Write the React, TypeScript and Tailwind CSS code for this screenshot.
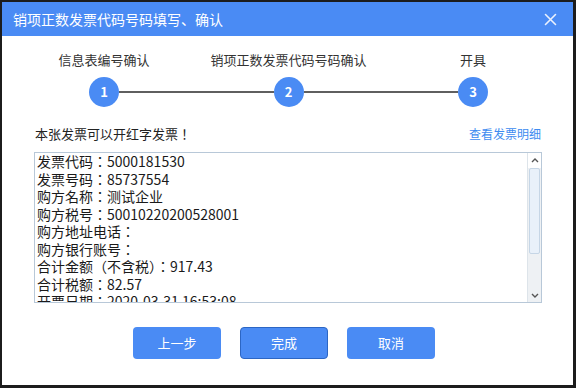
import React from "react";

const font = { fontFamily: '"Noto Sans CJK SC", "Noto Sans", sans-serif' };
const boxFont = { fontFamily: '"Noto Sans CJK TC", "Noto Sans CJK SC", sans-serif' };

const steps = ["信息表编号确认", "销项正数发票代码号码确认", "开具"];

const lines = [
  "发票代码：5000181530",
  "发票号码：85737554",
  "购方名称：测试企业",
  "购方税号：50010220200528001",
  "购方地址电话：",
  "购方银行账号：",
  "合计金额（不含税）：917.43",
  "合计税额：82.57",
  "开票日期：2020-03-31 16:53:08",
];

const StepCircle: React.FC<{ n: number }> = ({ n }) => (
  <div className="w-[30px] h-[30px] rounded-full bg-[#4a8bf4] flex items-center justify-center text-white text-[13px] font-bold shrink-0">
    {n}
  </div>
);

const App: React.FC = () => {
  return (
    <div className="w-[576px] h-[388px] bg-[#1c1c1c] pt-[2px] pl-[2px] pr-[3px] pb-[3px]" style={font}>
      <div className="h-full bg-white flex flex-col">
        {/* title bar */}
        <div className="h-[34px] bg-[#4a8bf4] flex items-center justify-between pl-[11px] pr-[12px] shrink-0">
          <span className="text-white text-[14px]">销项正数发票代码号码填写、确认</span>
          <svg width="13" height="13" viewBox="0 0 13 13" className="mr-[4px]">
            <path d="M1.5 1.5 L11.5 11.5 M11.5 1.5 L1.5 11.5" stroke="#eaf1fd" strokeWidth="1.6" strokeLinecap="round" />
          </svg>
        </div>

        {/* step labels */}
        <div className="flex items-center pl-[87px] pr-[85px] mt-[16px] text-[13px] leading-[16px] text-[#333]">
          <div className="w-[30px] flex justify-center whitespace-nowrap">{steps[0]}</div>
          <div className="flex-1" />
          <div className="w-[30px] flex justify-center whitespace-nowrap">{steps[1]}</div>
          <div className="flex-1" />
          <div className="w-[30px] flex justify-center whitespace-nowrap">{steps[2]}</div>
        </div>

        {/* step circles */}
        <div className="flex items-center pl-[87px] pr-[85px] mt-[9px]">
          <StepCircle n={1} />
          <div className="flex-1 h-[2px] bg-[#5f5f5f]" />
          <StepCircle n={2} />
          <div className="flex-1 h-[2px] bg-[#5f5f5f]" />
          <StepCircle n={3} />
        </div>

        {/* message row */}
        <div className="flex items-center justify-between pl-[33px] pr-[32px] mt-[19px] leading-[16px]">
          <span className="text-[13px] text-[#222]" style={boxFont}>本张发票可以开红字发票！</span>
          <span className="text-[12px] text-[#3d8bf0]">查看发票明细</span>
        </div>

        {/* detail box */}
        <div className="ml-[32px] mr-[31px] mt-[10px] h-[151px] border border-[#b8c8d8] flex overflow-hidden">
          <div className="flex-1 pl-[2px] text-[14px] leading-[17.5px] text-[#1a1a1a] overflow-hidden" style={boxFont}>
            {lines.map((l, i) => (
              <div key={i} className="whitespace-nowrap">
                {l}
              </div>
            ))}
          </div>
          <div className="w-[14px] flex flex-col bg-[#eef1f4] border-l border-[#dde4ea]">
            <div className="h-[15px] flex items-center justify-center bg-white">
              <svg width="8" height="5" viewBox="0 0 8 5">
                <path d="M1 4 L4 1 L7 4" stroke="#555" strokeWidth="1.4" fill="none" />
              </svg>
            </div>
            <div className="h-[86px] mx-[1px] bg-[#e9f1fa] border border-[#c6d6e6] rounded-[2px]" />
            <div className="flex-1" />
            <div className="h-[14px] flex items-center justify-center">
              <svg width="8" height="5" viewBox="0 0 8 5">
                <path d="M1 1 L4 4 L7 1" stroke="#555" strokeWidth="1.4" fill="none" />
              </svg>
            </div>
          </div>
        </div>

        {/* buttons */}
        <div className="flex gap-[19px] pl-[131px] mt-[24px]">
          <button className="w-[88px] h-[32px] rounded-[4px] bg-[#4a8bf4] text-white text-[13px]">上一步</button>
          <button className="w-[88px] h-[32px] rounded-[4px] bg-[#4a8bf4] border border-[#2c66c4] text-white text-[13px]">完成</button>
          <button className="w-[88px] h-[32px] rounded-[4px] bg-[#4a8bf4] text-white text-[13px]">取消</button>
        </div>
      </div>
    </div>
  );
};

export default App;
